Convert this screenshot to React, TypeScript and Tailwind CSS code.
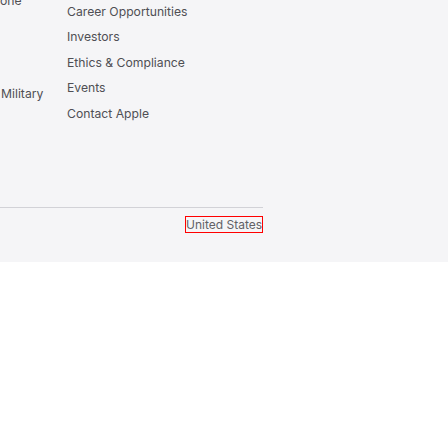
export default function App() {
  return (
    <div className="min-h-[448px] bg-white">
      <footer className="h-[262px] w-full overflow-hidden bg-[#f5f5f7] font-['Inter',sans-serif] text-[12.2px] font-normal leading-4 text-[#4f4f54]">
        <div className="w-[263px]">
          <div className="mt-[-7px] flex">
            <ul className="w-[67px] shrink-0">
              <li>one</li>
              <li className="mt-[76.5px] pl-px">Military</li>
            </ul>
            <ul className="pt-[11px]">
              <li>Career Opportunities</li>
              <li className="mt-[9.4px]">Investors</li>
              <li className="mt-[9.4px]">Ethics &amp; Compliance</li>
              <li className="mt-[9.4px]">Events</li>
              <li className="mt-[9.4px]">Contact Apple</li>
            </ul>
          </div>
          <div className="mt-[85px] border-t border-[#d2d2d7]" />
          <div className="mt-[8px] flex justify-end">
            <span className="w-[78px] overflow-hidden whitespace-nowrap border border-[#ff0000] text-[12px] leading-[15px] text-[#616166]">
              United States
            </span>
          </div>
        </div>
      </footer>
    </div>
  );
}
